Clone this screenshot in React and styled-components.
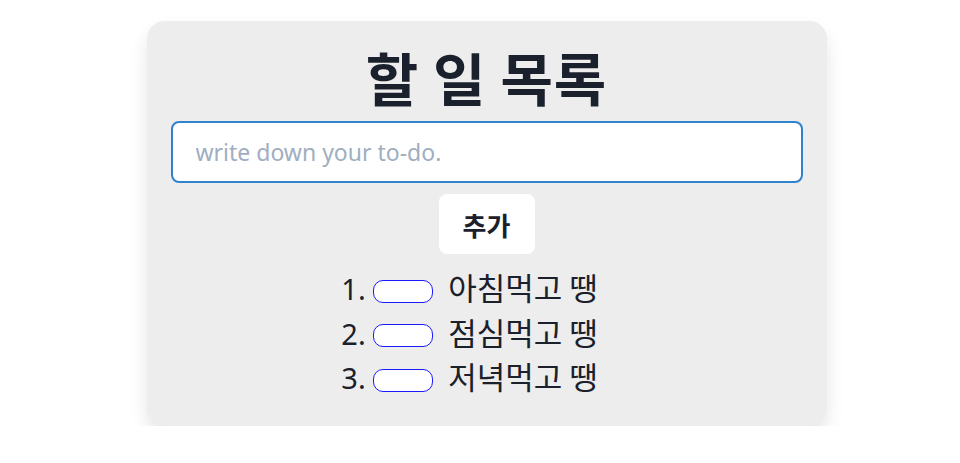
import React, { useState } from 'react';
import styled, { createGlobalStyle } from 'styled-components';

const GlobalStyle = createGlobalStyle`
    body {
        margin: 0;
        background: #ffffff;
        font-family: "Noto Sans", "Noto Sans CJK KR", sans-serif;
        color: #1a202c;
    }
`;

const Page = styled.div`
    display: flex;
    justify-content: center;
    padding: 21px 0 0 13px;
`;

const Card = styled.div`
    width: 680px;
    box-sizing: border-box;
    padding: 24px 24px 25px;
    background: #ededed;
    border-radius: 18px;
    box-shadow: 0 10px 18px rgba(0, 0, 0, 0.1);
    display: flex;
    flex-direction: column;
    align-items: center;
`;

const Title = styled.h1`
    margin: 0 0 14px;
    font-family: "Noto Sans CJK KR", sans-serif;
    font-size: 57px;
    line-height: 62px;
    font-weight: 700;
    letter-spacing: 1px;
`;

const Input = styled.input`
    width: 100%;
    height: 62px;
    box-sizing: border-box;
    padding: 0 0 0 23px;
    border: 2px solid #3182ce;
    border-radius: 8px;
    background: #ffffff;
    font-family: "Noto Sans", "Noto Sans CJK KR", sans-serif;
    font-size: 23px;
    color: #1a202c;
    outline: none;

    &::placeholder {
        color: #a0aec0;
    }
`;

const AddButton = styled.button`
    margin-top: 11px;
    width: 96px;
    height: 60px;
    border: none;
    border-radius: 8px;
    background: #ffffff;
    font-family: "Noto Sans CJK KR", sans-serif;
    font-size: 26px;
    font-weight: 700;
    color: #1a202c;
    cursor: pointer;
`;

const TodoList = styled.ol`
    margin: 13px 0 0;
    padding: 0 32px 0 30px;
    list-style: decimal outside;
    font-family: "Noto Sans", "Noto Sans CJK KR", sans-serif;
    font-size: 27px;
    line-height: 44.5px;
`;

const TodoItem = styled.li`
    height: 44.5px;
    white-space: nowrap;

    &::marker {
        font-size: 29px;
    }
`;

const Toggle = styled.span`
    display: inline-block;
    vertical-align: middle;
    width: 60px;
    height: 23px;
    box-sizing: border-box;
    margin: -3px 15px 0 0;
    border: 1px solid #1a1aff;
    border-radius: 10px;
    background: #ffffff;
`;

const ItemText = styled.span`
    font-family: "Noto Sans CJK KR", sans-serif;
    font-size: 31px;
    line-height: 30px;
`;

export default function App() {
    const [todos] = useState(['아침먹고 땡', '점심먹고 땡', '저녁먹고 땡']);

    return (
        <>
            <GlobalStyle />
            <Page>
                <Card>
                    <Title>할 일 목록</Title>
                    <Input autoFocus placeholder='write down your to-do.' />
                    <AddButton>추가</AddButton>
                    <TodoList>
                        {todos.map((todo) => (
                            <TodoItem key={todo}>
                                <Toggle />
                                <ItemText>{todo}</ItemText>
                            </TodoItem>
                        ))}
                    </TodoList>
                </Card>
            </Page>
        </>
    );
}
